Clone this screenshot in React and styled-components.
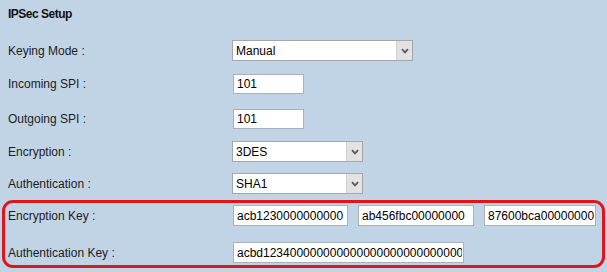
import React from 'react';
import styled, { createGlobalStyle } from 'styled-components';

const GlobalStyle = createGlobalStyle`
  html, body {
    margin: 0;
    padding: 0;
    background: #c1d4e6;
  }
  body {
    font-family: Arial, "Liberation Sans", sans-serif;
    font-size: 12px;
    color: #222222;
  }
`;

const Page = styled.div`
  width: 607px;
  height: 272px;
  overflow: hidden;
  box-sizing: border-box;
  padding: 7px 0 0 8px;
`;

const Title = styled.h3`
  margin: 0;
  font-size: 12px;
  font-weight: bold;
  line-height: 14px;
  letter-spacing: -0.5px;
  color: #111111;
`;

const Row = styled.div`
  display: grid;
  grid-template-columns: 224px 1fr;
  align-items: center;
  height: 21px;
  margin-top: ${(p) => p.$gap || 0}px;
`;

const Label = styled.label`
  font-size: 12px;
  color: #1c1c1c;
  white-space: nowrap;
`;

const Fields = styled.div`
  display: flex;
  align-items: center;
  gap: 9px;
`;

const TextInput = styled.input`
  box-sizing: border-box;
  width: ${(p) => p.$w}px;
  height: ${(p) => p.$h || 21}px;
  margin: 0 0 0 1px;
  padding: 0 1px 0 3px;
  border: 1px solid #aab0b8;
  background: #ffffff;
  font-family: Arial, "Liberation Sans", sans-serif;
  font-size: 12px;
  color: #000000;
  outline: none;
`;

const SelectBox = styled.div`
  box-sizing: border-box;
  display: flex;
  width: ${(p) => p.$w}px;
  height: 21px;
  border: 1px solid #a4a8ad;
  background: #ffffff;
`;

const NativeSelect = styled.select`
  appearance: none;
  flex: 1;
  min-width: 0;
  height: 100%;
  margin: 0;
  padding: 0 3px;
  border: none;
  background: transparent;
  font-family: Arial, "Liberation Sans", sans-serif;
  font-size: 12px;
  color: #000000;
  outline: none;
`;

const ArrowButton = styled.span`
  box-sizing: border-box;
  display: flex;
  align-items: center;
  justify-content: center;
  width: 16px;
  height: 100%;
  background: #e2e2e2;
  border-left: 1px solid #cfcfcf;
`;

const Highlight = styled.div`
  margin: 6px 2px 0 -6px;
  padding: 2px 0 2px 3px;
  border: 3px solid #e0141e;
  border-radius: 11px;
`;

const Chevron = () => (
  <svg width="8" height="6" viewBox="0 0 8 6">
    <path d="M1 1.2 L4 4.4 L7 1.2" fill="none" stroke="#5a5a5a" strokeWidth="1.8" />
  </svg>
);

const Select = ({ width, value, options }) => (
  <SelectBox $w={width}>
    <NativeSelect defaultValue={value}>
      {options.map((o) => (
        <option key={o}>{o}</option>
      ))}
    </NativeSelect>
    <ArrowButton>
      <Chevron />
    </ArrowButton>
  </SelectBox>
);

const App = () => (
  <>
    <GlobalStyle />
    <Page>
      <Title>IPSec Setup</Title>

      <Row $gap={19}>
        <Label>Keying Mode :</Label>
        <Fields>
          <Select width={181} value="Manual" options={['Manual', 'IKE with Preshared key']} />
        </Fields>
      </Row>

      <Row $gap={12}>
        <Label>Incoming SPI :</Label>
        <Fields>
          <TextInput $w={71} $h={20} defaultValue="101" />
        </Fields>
      </Row>

      <Row $gap={14}>
        <Label>Outgoing SPI :</Label>
        <Fields>
          <TextInput $w={71} $h={20} defaultValue="101" />
        </Fields>
      </Row>

      <Row $gap={12}>
        <Label>Encryption :</Label>
        <Fields>
          <Select width={131} value="3DES" options={['DES', '3DES', 'AES-128']} />
        </Fields>
      </Row>

      <Row $gap={11}>
        <Label>Authentication :</Label>
        <Fields>
          <Select width={131} value="SHA1" options={['MD5', 'SHA1']} />
        </Fields>
      </Row>

      <Highlight>
        <Row>
          <Label>Encryption Key :</Label>
          <Fields>
            <TextInput $w={115} defaultValue="acb1230000000000" />
            <TextInput $w={116} defaultValue="ab456fbc00000000" />
            <TextInput $w={112} defaultValue="87600bca00000000" />
          </Fields>
        </Row>
        <Row $gap={16}>
          <Label>Authentication Key :</Label>
          <Fields>
            <TextInput $w={231} defaultValue="acbd1234000000000000000000000000000000000" />
          </Fields>
        </Row>
      </Highlight>
    </Page>
  </>
);

export default App;
